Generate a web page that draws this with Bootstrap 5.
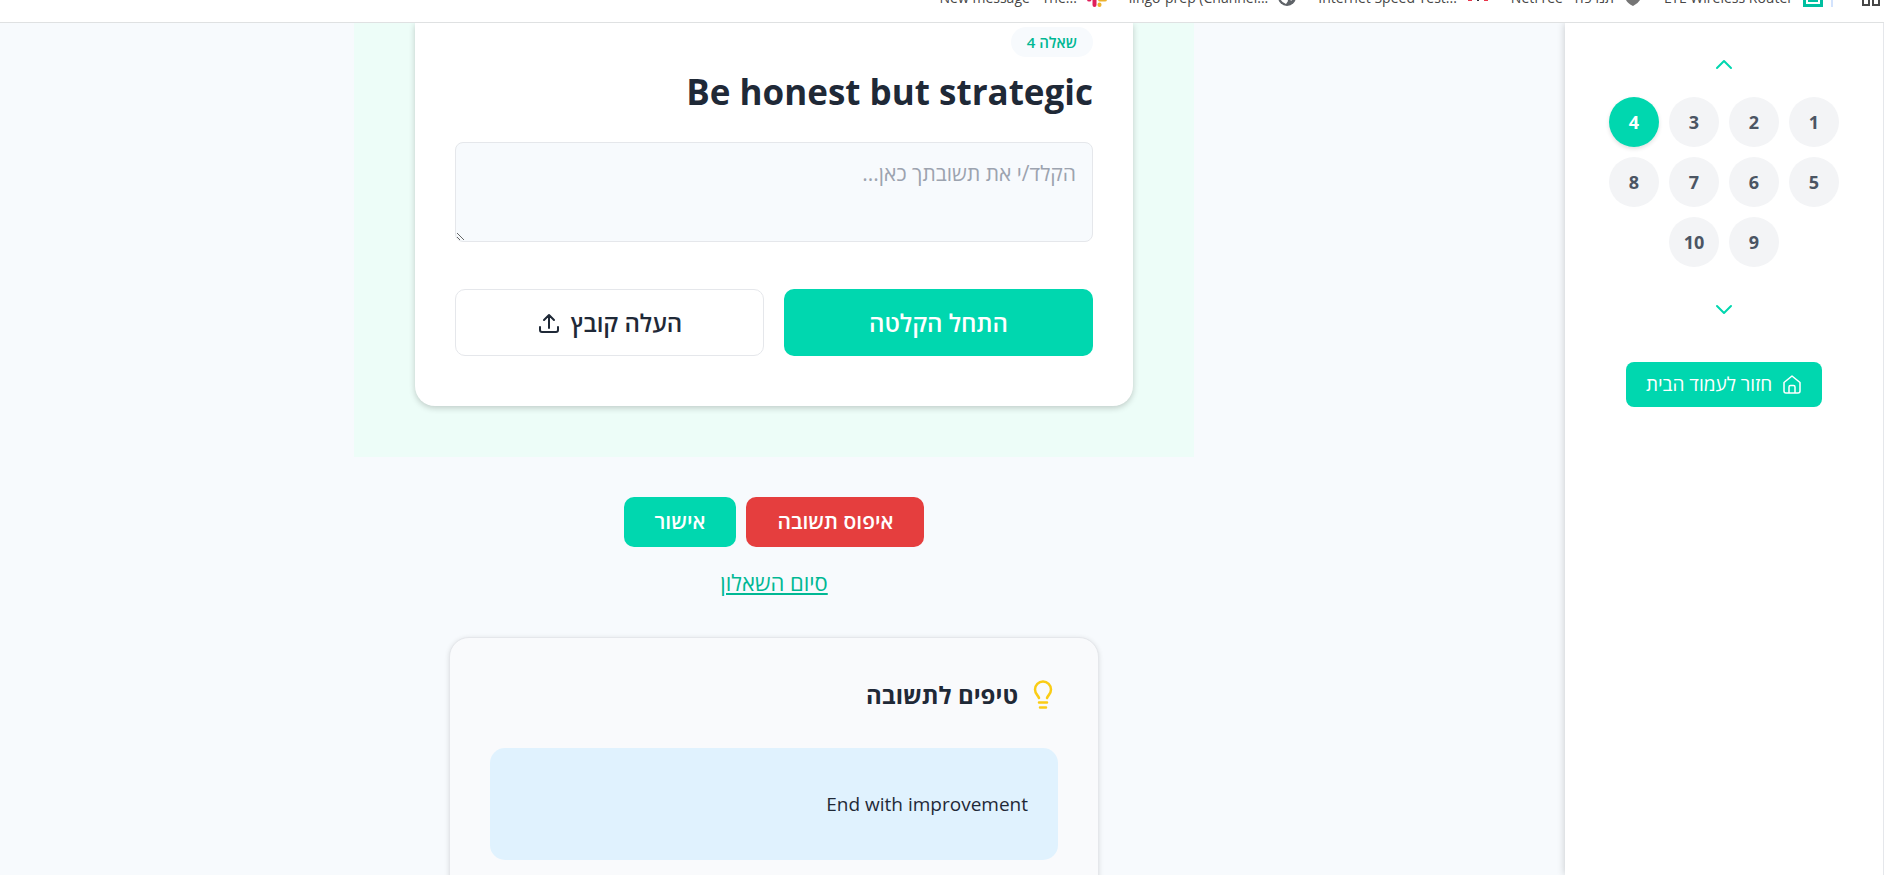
<!DOCTYPE html>
<html lang="he" dir="rtl">
<head>
<meta charset="utf-8">
<meta name="viewport" content="width=device-width, initial-scale=1">
<title>שאלה 4</title>
<link href="https://cdn.jsdelivr.net/npm/bootstrap@5.3.0/dist/css/bootstrap.min.css" rel="stylesheet">
<script src="https://cdn.jsdelivr.net/npm/bootstrap@5.3.0/dist/js/bootstrap.bundle.min.js"></script>
<style>
  :root { --mint: #00d7af; --mint-dark: #00b894; --ink: #1f2937; --page: #f7fafd; --line: #e5e7eb; }
  body { font-family: "Open Sans", "Noto Sans", "Liberation Sans", sans-serif; color: var(--ink); background: var(--page); }
  .bookmarks { height: 23px; background: #fff; border-bottom: 1px solid #dfe1e2; }
  .bookmarks-row { height: 50px; font-size: 14px; padding-right: 4px; gap: 22px; }
  .bookmarks-row a { color: #474747; gap: 10px; }
  .bookmarks-row svg { flex: none; }
  .bar-split { width: 2px; height: 20px; background: #d3e3fd; margin-right: 7px; margin-left: -14px; }
  .side { width: 319px; background: #fff; border-right: 1px solid var(--line); box-shadow: 0 0 8px rgba(0,0,0,.2); z-index: 1; padding: 24px 0; }
  .arrow { width: 34px; height: 34px; color: var(--mint); }
  .numbers { width: 230px; gap: 10px; margin: 16px 0 25px; }
  .num { width: 50px; height: 50px; background: #f3f4f6; color: #4b5563; font-size: 18px; }
  .num.active { background: var(--mint); color: #fff; box-shadow: 0 2px 4px rgba(0,0,0,.12); }
  .home-btn { background: var(--mint); color: #fff; height: 45px; border-radius: 8px; padding: 0 20px; font-size: 19px; margin-top: 36px; gap: 10px; }
  .stage { padding-right: 17px; }
  .mint-panel { width: 840px; max-width: 100%; background: #edfdf8; padding: 0 61px 51px; }
  .question { background: #fff; border-radius: 0 0 20px 20px; padding: 4px 40px 50px; box-shadow: 0 2px 6px rgba(0,0,0,.2); }
  .q-tag { background: var(--page); color: var(--mint-dark); height: 30px; padding: 0 16px; font-size: 15px; }
  .q-title { font-size: 35px; line-height: 50px; margin: 10px 0 25px; }
  .answer { height: 100px; background: var(--page); border: 1px solid var(--line); border-radius: 8px; padding: 15px 16px; font-size: 21px; line-height: 30px; }
  .answer::placeholder { color: #9ca3af; }
  .choices { gap: 20px; margin-top: 47px; }
  .choice { height: 67px; border-radius: 10px; font-size: 24px; font-weight: 600; gap: 10px; }
  .choice, .act { border: 1px solid transparent; color: #fff; background: var(--mint); }
  .choice.plain { background: #fff; border-color: var(--line); color: var(--ink); }
  .actions { gap: 10px; margin-top: 40px; }
  .act { height: 50px; border-radius: 10px; padding: 0 30px; font-size: 21px; font-weight: 600; }
  .act.reset { background: #e53e3e; }
  .finish { color: var(--mint-dark); font-size: 22px; line-height: 30px; margin: 20px 0 40px; }
  .tips { width: 650px; max-width: 100%; background: #f9fafc; border: 1px solid var(--line); border-radius: 20px; padding: 38px 40px; box-shadow: 0 1px 5px rgba(0,0,0,.12); }
  .tips-head { gap: 10px; }
  .tips h2 { font-size: 24px; line-height: 38px; margin: 0; }
  .tip { height: 112px; background: #e0f2fe; border-radius: 15px; padding: 0 30px; font-size: 19px; margin-top: 34px; }
</style>
</head>
<body>
<div class="vh-100 d-flex flex-column overflow-hidden">
  <header class="bookmarks d-flex align-items-end overflow-hidden flex-shrink-0">
    <nav class="bookmarks-row d-flex align-items-center text-nowrap flex-shrink-0" aria-label="סימניות">
      <svg width="18" height="18" viewBox="0 0 18 18" fill="none" stroke="#474747" stroke-width="2"><path d="M1 1h6v6H1zM11 1h6v6h-6zM1 11h6v6H1zM11 11h6v6h-6z"/></svg>
      <span class="bar-split"></span>
      <a class="d-flex align-items-center text-decoration-none" href="#"><svg width="20" height="20" viewBox="0 0 20 20" fill="none" stroke="#00bfa0" stroke-width="3"><path d="M1.500 1.500h17v17h-17z"/><path d="M6 6h8v8H6z" stroke-width="2"/></svg><span dir="ltr">LTE Wireless Router</span></a>
      <a class="d-flex align-items-center text-decoration-none" href="#"><svg width="18" height="18" viewBox="0 0 18 18" fill="#757575"><path d="M1 3l8-3 8 3v5q0 6-8 10-8-4-8-10z"/></svg><span dir="ltr">NetFree - תנו פה</span></a>
      <a class="d-flex align-items-center text-decoration-none" href="#"><svg width="22" height="14" viewBox="0 0 22 14"><path d="M1 4h4v7H1zM17 4h4v7h-4z" fill="#e8354a"/><path d="M10 8h2v3h-2z" fill="#33343f"/></svg><span dir="ltr">Internet Speed Test...</span></a>
      <a class="d-flex align-items-center text-decoration-none" href="#"><svg width="18" height="18" viewBox="0 0 18 18"><circle cx="9" cy="9" r="9" fill="#5f6368"/><path d="M4 6l5 3 1 4-2 3Q2 14 2 8zM11 3q5 2 5 7l-3 3-2-4z" fill="#fff"/></svg><span dir="ltr">lingo-prep (Channel...</span></a>
      <a class="d-flex align-items-center text-decoration-none" href="#"><svg width="20" height="20" viewBox="0 0 20 20" stroke-width="4" stroke-linecap="round"><path d="M2 7h6M8 2v1" stroke="#36c5f0"/><path d="M12 2v6M17 8h1" stroke="#2eb67d"/><path d="M13 12.500h5M12.500 17.500v.5" stroke="#ecb22e"/><path d="M7.500 12v6M2 12.500h.5" stroke="#e01e5a"/></svg><span dir="ltr">New message - The...</span></a>
    </nav>
  </header>
  <div class="d-flex flex-grow-1 overflow-hidden">
    <aside class="side d-flex flex-column align-items-center flex-shrink-0">
      <button class="arrow btn p-0 border-0 d-flex align-items-center justify-content-center" aria-label="למעלה"><svg width="24" height="24" viewBox="0 0 24 24" fill="none" stroke="currentColor" stroke-width="2" stroke-linecap="round" stroke-linejoin="round"><path d="M5 16l7-7 7 7"/></svg></button>
      <div class="numbers d-flex flex-wrap justify-content-center">
        <button class="num btn rounded-circle border-0 p-0 fw-bold">1</button>
        <button class="num btn rounded-circle border-0 p-0 fw-bold">2</button>
        <button class="num btn rounded-circle border-0 p-0 fw-bold">3</button>
        <button class="num active btn rounded-circle border-0 p-0 fw-bold">4</button>
        <button class="num btn rounded-circle border-0 p-0 fw-bold">5</button>
        <button class="num btn rounded-circle border-0 p-0 fw-bold">6</button>
        <button class="num btn rounded-circle border-0 p-0 fw-bold">7</button>
        <button class="num btn rounded-circle border-0 p-0 fw-bold">8</button>
        <button class="num btn rounded-circle border-0 p-0 fw-bold">9</button>
        <button class="num btn rounded-circle border-0 p-0 fw-bold">10</button>
      </div>
      <button class="arrow btn p-0 border-0 d-flex align-items-center justify-content-center" aria-label="למטה"><svg width="24" height="24" viewBox="0 0 24 24" fill="none" stroke="currentColor" stroke-width="2" stroke-linecap="round" stroke-linejoin="round"><path d="M5 9l7 7 7-7"/></svg></button>
      <a class="home-btn d-flex align-items-center text-decoration-none" href="#"><svg width="20" height="20" viewBox="0 0 20 20" fill="none" stroke="currentColor" stroke-width="1.500" stroke-linejoin="round"><path d="M2 7.500l8-6.500 8 6.500v8.500q0 2-2 2H4q-2 0-2-2z"/><path d="M7 18v-6q0-1.500 1.500-1.500h3q1.500 0 1.500 1.500v6"/></svg><span>חזור לעמוד הבית</span></a>
    </aside>
    <main class="stage flex-grow-1 d-flex flex-column align-items-center overflow-hidden">
      <section class="mint-panel flex-shrink-0">
        <div class="question">
          <div class="d-flex"><span class="q-tag rounded-pill d-flex align-items-center fw-semibold">שאלה 4</span></div>
          <h1 class="q-title fw-bold">Be honest but strategic</h1>
          <textarea class="answer form-control" aria-label="תשובה" placeholder="הקלד/י את תשובתך כאן..."></textarea>
          <div class="choices d-flex">
            <button class="choice flex-fill w-50 d-flex align-items-center justify-content-center">התחל הקלטה</button>
            <button class="choice plain flex-fill w-50 d-flex align-items-center justify-content-center"><span>העלה קובץ</span><svg width="24" height="24" viewBox="0 0 24 24" fill="none" stroke="currentColor" stroke-width="2" stroke-linecap="round" stroke-linejoin="round"><path d="M3 16v3q0 2 2 2h14q2 0 2-2v-3M12 17V4M7 9l5-5 5 5"/></svg></button>
          </div>
        </div>
      </section>
      <div class="actions d-flex flex-shrink-0">
        <button class="act reset">איפוס תשובה</button>
        <button class="act">אישור</button>
      </div>
      <a class="finish flex-shrink-0" href="#">סיום השאלון</a>
      <section class="tips flex-shrink-0">
        <div class="tips-head d-flex align-items-center"><svg width="30" height="30" viewBox="-3 0 30 30" fill="none" stroke="#facc15" stroke-width="2.500" stroke-linecap="round"><path d="M8 18C7 15 4 14 4 9.500a8 8 0 0 1 16 0C20 14 17 15 16 18M8 22.500h8M9 27.500h6"/></svg><h2 class="fw-bold">טיפים לתשובה</h2></div>
        <div class="tip d-flex align-items-center">End with improvement</div>
      </section>
    </main>
  </div>
</div>
</body>
</html>
